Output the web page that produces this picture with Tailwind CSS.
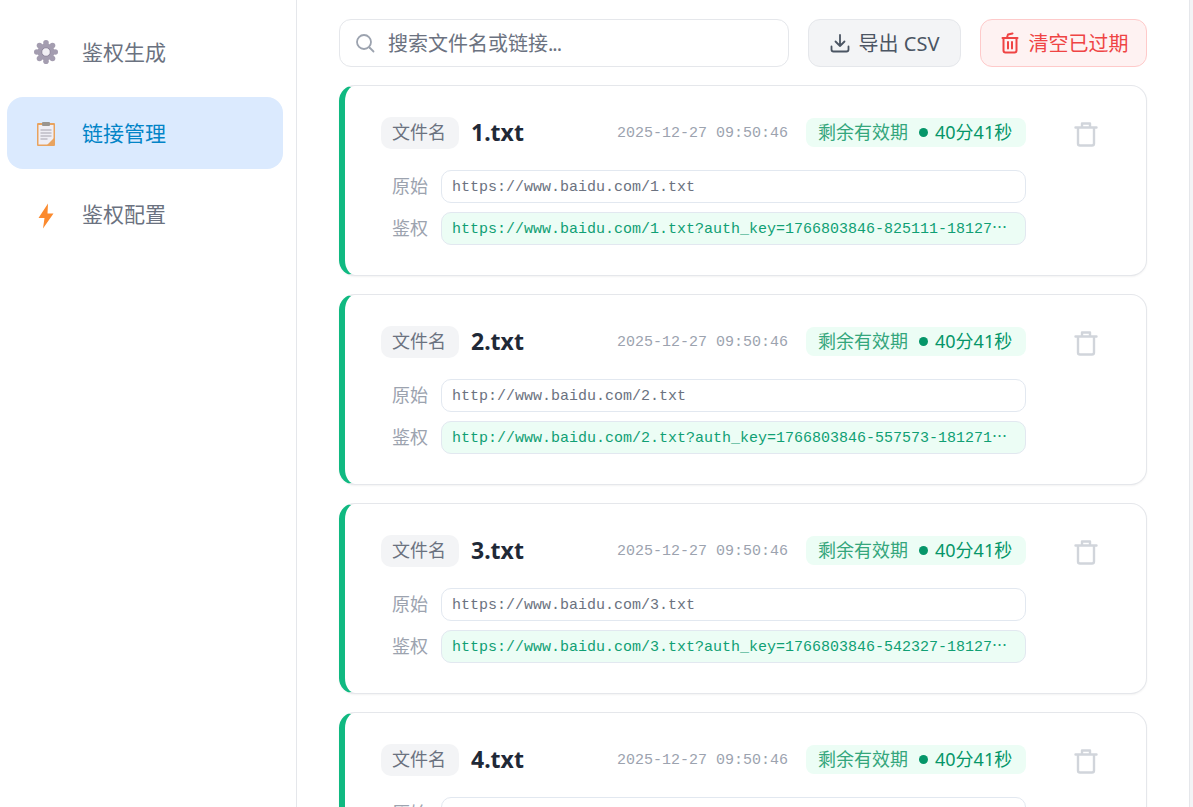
<!DOCTYPE html>
<html lang="zh"><head><meta charset="utf-8">
<script src="https://cdn.jsdelivr.net/npm/@tailwindcss/browser@4"></script>
<title>链接管理</title></head>
<body class="bg-white overflow-hidden">
<div class="flex h-[807px] w-[1193px] overflow-hidden font-['Noto_Sans','Noto_Sans_CJK_SC',sans-serif]">
  <aside class="w-[297px] shrink-0 border-r border-[#e5e7eb] pl-[7px] pr-[13px] pt-[16px] flex flex-col gap-[9px] text-[21px]">
    <a class="h-[72px] rounded-[16px] flex items-center pl-[26px] gap-[23px] text-[#6b7280]">
      <svg class="w-[26px] h-[26px]" viewBox="0 0 26 26"><g fill="#a49db0"><circle cx="13" cy="13" r="8.500"/><circle cx="13" cy="3.800" r="2.800"/><circle cx="13" cy="22.200" r="2.800"/><circle cx="3.800" cy="13" r="2.800"/><circle cx="22.200" cy="13" r="2.800"/><circle cx="6.500" cy="6.500" r="2.800"/><circle cx="19.500" cy="6.500" r="2.800"/><circle cx="6.500" cy="19.500" r="2.800"/><circle cx="19.500" cy="19.500" r="2.800"/></g><circle cx="13" cy="13" r="4.300" fill="#f1eff4"/><circle cx="13" cy="13" r="4.300" fill="none" stroke="#8f879d" stroke-width="1"/></svg>
      <span class="pt-[1px]">鉴权生成</span>
    </a>
    <a class="h-[72px] rounded-[16px] flex items-center pl-[26px] gap-[23px] bg-[#dbeafe] text-[#0284c7]">
      <svg class="w-[26px] h-[26px] mt-[2px]" viewBox="0 0 26 26"><rect x="4" y="2" width="18" height="23" rx="1" fill="#e8a35f"/><rect x="5.500" y="4" width="15" height="19.500" fill="#efeef5"/><path d="M21 17v7h-7z" fill="#e8a35f"/><rect x="9" y="1" width="8" height="4" rx="1" fill="#9a958f"/><path d="M7.500 9h11M7.500 12h11M7.500 15h11M7.500 18h7" stroke="#a5a2ad" stroke-width="1.200"/></svg>
      <span class="pt-[1px]">链接管理</span>
    </a>
    <a class="h-[72px] rounded-[16px] flex items-center pl-[26px] gap-[23px] text-[#6b7280]">
      <svg class="w-[26px] h-[26px] mt-[3px]" viewBox="0 0 26 26"><path d="M15 0.500 5.500 15H11.500L10 25.500 20.500 10.500H14.500z" fill="#fb8a2e"/></svg>
      <span class="pt-[1px]">鉴权配置</span>
    </a>
  </aside>
  <main class="flex-1 min-w-0 pl-[42px] pr-[42px] pt-[19px]">
    <div class="flex gap-[19px] h-[48px]">
      <div class="flex-1 border border-[#e5e7eb] rounded-[12px] flex items-center pl-[15px] gap-[13px] text-[20px] text-[#6b7280]">
        <svg class="w-[20px] h-[20px]" viewBox="0 0 20 20" fill="none" stroke="#9ca3af" stroke-width="1.800" stroke-linecap="round"><circle cx="9" cy="9" r="7"/><path d="m14.500 14.500 4 4"/></svg>
        <span class="pt-[1px]">搜索文件名或链接<span class="tracking-[-1px]">...</span></span>
      </div>
      <button class="w-[153px] rounded-[12px] border border-[#e5e7eb] bg-[#f3f4f6] text-[#4b5563] text-[20px] flex items-center justify-center gap-[9px]">
        <svg class="w-[20px] h-[20px]" viewBox="0 0 20 20" fill="none" stroke="#4b5563" stroke-width="1.800" stroke-linecap="round" stroke-linejoin="round"><path d="M10 2v11M5.500 8.500 10 13l4.500-4.500M1.500 13.500v3a2 2 0 0 0 2 2h13a2 2 0 0 0 2-2v-3"/></svg>
        <span class="pt-[1px]">导出 CSV</span>
      </button>
      <button class="w-[167px] rounded-[12px] border border-[#fecaca] bg-[#fef2f2] text-[#ef4444] text-[20px] flex items-center justify-center gap-[10px] pl-[2px]">
        <svg class="w-[18px] h-[22px]" viewBox="0 0 18 22" fill="none" stroke="#ef4444" stroke-width="2" stroke-linecap="round" stroke-linejoin="round"><path d="M1.500 6h15M6 5.500 7 2.500l4.500-1M2.500 6v12.500a2 2 0 0 0 2 2h9a2 2 0 0 0 2-2V6M7 10v6.500M11 10v6.500"/></svg>
        <span class="pt-[1px]">清空已过期</span>
      </button>
    </div>
    <div class="mt-[18px] flex flex-col gap-[18px]">
      <section class="h-[191px] shrink-0 flex border border-[#e5e7eb] border-l-[6px] border-l-[#10b981] rounded-[16px] bg-white shadow-[0_1px_2px_rgba(0,0,0,0.05)] pl-[36px] pt-[31px]">
        <div class="w-[645px] shrink-0">
          <div class="flex items-center h-[32px]">
            <span class="w-[78px] h-[32px] rounded-[10px] bg-[#f3f4f6] text-[#6b7280] text-[18px] pr-[2px] pb-[2px] flex items-center justify-center shrink-0">文件名</span>
            <span class="ml-[12px] pb-[2px] text-[23px] font-bold text-[#1f2937]">1.txt</span>
            <span class="ml-auto pt-[2px] font-['Liberation_Mono',monospace] text-[15px] text-[#9ca3af]">2025-12-27 09:50:46</span>
            <span class="ml-[18px] mb-[1px] w-[220px] h-[29px] rounded-[8px] bg-[#ecfdf5] text-[18px] flex items-center pl-[12px]"><span class="text-[#34a67c]">剩余有效期</span><span class="ml-[11px] w-[9px] h-[9px] rounded-full bg-[#059669]"></span><span class="ml-[7px] text-[#059669]">40分41秒</span></span>
          </div>
          <div class="mt-[21px] flex items-center h-[33px] text-[18px]"><span class="w-[60px] pl-[11px] text-[#9ca3af] shrink-0">原始</span><span class="flex-1 min-w-0 h-[33px] border border-[#e2e8f0] rounded-[10px] px-[10px] pt-[4px] flex items-center font-['Liberation_Mono',monospace] text-[15px] text-[#6b7280]"><span class="truncate">https://www.baidu.com/1.txt</span></span></div>
          <div class="mt-[9px] flex items-center h-[33px] text-[18px]"><span class="w-[60px] pl-[11px] text-[#9ca3af] shrink-0">鉴权</span><span class="flex-1 min-w-0 h-[33px] border border-[#e2e8f0] rounded-[10px] px-[10px] flex items-center bg-[#ecfdf5] font-['Liberation_Mono',monospace] text-[15px] text-[#10a074]"><span class="truncate">https://www.baidu.com/1.txt?auth_key=1766803846-825111-18127<span class="font-['Noto_Sans_CJK_SC']">…</span></span></span></div>
        </div>
        <svg class="ml-[48px] mt-[4px] w-[24px] h-[26px]" viewBox="0 0 24 26" fill="none" stroke="#d1d5db" stroke-width="2.400" stroke-linecap="round" stroke-linejoin="round"><path d="M1.500 6.500h21M8 6V2.500h8V6M4 7v15.500a2 2 0 0 0 2 2h12a2 2 0 0 0 2-2V7"/></svg>
      </section>
      <section class="h-[191px] shrink-0 flex border border-[#e5e7eb] border-l-[6px] border-l-[#10b981] rounded-[16px] bg-white shadow-[0_1px_2px_rgba(0,0,0,0.05)] pl-[36px] pt-[31px]">
        <div class="w-[645px] shrink-0">
          <div class="flex items-center h-[32px]">
            <span class="w-[78px] h-[32px] rounded-[10px] bg-[#f3f4f6] text-[#6b7280] text-[18px] pr-[2px] pb-[2px] flex items-center justify-center shrink-0">文件名</span>
            <span class="ml-[12px] pb-[2px] text-[23px] font-bold text-[#1f2937]">2.txt</span>
            <span class="ml-auto pt-[2px] font-['Liberation_Mono',monospace] text-[15px] text-[#9ca3af]">2025-12-27 09:50:46</span>
            <span class="ml-[18px] mb-[1px] w-[220px] h-[29px] rounded-[8px] bg-[#ecfdf5] text-[18px] flex items-center pl-[12px]"><span class="text-[#34a67c]">剩余有效期</span><span class="ml-[11px] w-[9px] h-[9px] rounded-full bg-[#059669]"></span><span class="ml-[7px] text-[#059669]">40分41秒</span></span>
          </div>
          <div class="mt-[21px] flex items-center h-[33px] text-[18px]"><span class="w-[60px] pl-[11px] text-[#9ca3af] shrink-0">原始</span><span class="flex-1 min-w-0 h-[33px] border border-[#e2e8f0] rounded-[10px] px-[10px] pt-[4px] flex items-center font-['Liberation_Mono',monospace] text-[15px] text-[#6b7280]"><span class="truncate">http://www.baidu.com/2.txt</span></span></div>
          <div class="mt-[9px] flex items-center h-[33px] text-[18px]"><span class="w-[60px] pl-[11px] text-[#9ca3af] shrink-0">鉴权</span><span class="flex-1 min-w-0 h-[33px] border border-[#e2e8f0] rounded-[10px] px-[10px] flex items-center bg-[#ecfdf5] font-['Liberation_Mono',monospace] text-[15px] text-[#10a074]"><span class="truncate">http://www.baidu.com/2.txt?auth_key=1766803846-557573-181271<span class="font-['Noto_Sans_CJK_SC']">…</span></span></span></div>
        </div>
        <svg class="ml-[48px] mt-[4px] w-[24px] h-[26px]" viewBox="0 0 24 26" fill="none" stroke="#d1d5db" stroke-width="2.400" stroke-linecap="round" stroke-linejoin="round"><path d="M1.500 6.500h21M8 6V2.500h8V6M4 7v15.500a2 2 0 0 0 2 2h12a2 2 0 0 0 2-2V7"/></svg>
      </section>
      <section class="h-[191px] shrink-0 flex border border-[#e5e7eb] border-l-[6px] border-l-[#10b981] rounded-[16px] bg-white shadow-[0_1px_2px_rgba(0,0,0,0.05)] pl-[36px] pt-[31px]">
        <div class="w-[645px] shrink-0">
          <div class="flex items-center h-[32px]">
            <span class="w-[78px] h-[32px] rounded-[10px] bg-[#f3f4f6] text-[#6b7280] text-[18px] pr-[2px] pb-[2px] flex items-center justify-center shrink-0">文件名</span>
            <span class="ml-[12px] pb-[2px] text-[23px] font-bold text-[#1f2937]">3.txt</span>
            <span class="ml-auto pt-[2px] font-['Liberation_Mono',monospace] text-[15px] text-[#9ca3af]">2025-12-27 09:50:46</span>
            <span class="ml-[18px] mb-[1px] w-[220px] h-[29px] rounded-[8px] bg-[#ecfdf5] text-[18px] flex items-center pl-[12px]"><span class="text-[#34a67c]">剩余有效期</span><span class="ml-[11px] w-[9px] h-[9px] rounded-full bg-[#059669]"></span><span class="ml-[7px] text-[#059669]">40分41秒</span></span>
          </div>
          <div class="mt-[21px] flex items-center h-[33px] text-[18px]"><span class="w-[60px] pl-[11px] text-[#9ca3af] shrink-0">原始</span><span class="flex-1 min-w-0 h-[33px] border border-[#e2e8f0] rounded-[10px] px-[10px] pt-[4px] flex items-center font-['Liberation_Mono',monospace] text-[15px] text-[#6b7280]"><span class="truncate">https://www.baidu.com/3.txt</span></span></div>
          <div class="mt-[9px] flex items-center h-[33px] text-[18px]"><span class="w-[60px] pl-[11px] text-[#9ca3af] shrink-0">鉴权</span><span class="flex-1 min-w-0 h-[33px] border border-[#e2e8f0] rounded-[10px] px-[10px] flex items-center bg-[#ecfdf5] font-['Liberation_Mono',monospace] text-[15px] text-[#10a074]"><span class="truncate">https://www.baidu.com/3.txt?auth_key=1766803846-542327-18127<span class="font-['Noto_Sans_CJK_SC']">…</span></span></span></div>
        </div>
        <svg class="ml-[48px] mt-[4px] w-[24px] h-[26px]" viewBox="0 0 24 26" fill="none" stroke="#d1d5db" stroke-width="2.400" stroke-linecap="round" stroke-linejoin="round"><path d="M1.500 6.500h21M8 6V2.500h8V6M4 7v15.500a2 2 0 0 0 2 2h12a2 2 0 0 0 2-2V7"/></svg>
      </section>
      <section class="h-[191px] shrink-0 flex border border-[#e5e7eb] border-l-[6px] border-l-[#10b981] rounded-[16px] bg-white shadow-[0_1px_2px_rgba(0,0,0,0.05)] pl-[36px] pt-[31px]">
        <div class="w-[645px] shrink-0">
          <div class="flex items-center h-[32px]">
            <span class="w-[78px] h-[32px] rounded-[10px] bg-[#f3f4f6] text-[#6b7280] text-[18px] pr-[2px] pb-[2px] flex items-center justify-center shrink-0">文件名</span>
            <span class="ml-[12px] pb-[2px] text-[23px] font-bold text-[#1f2937]">4.txt</span>
            <span class="ml-auto pt-[2px] font-['Liberation_Mono',monospace] text-[15px] text-[#9ca3af]">2025-12-27 09:50:46</span>
            <span class="ml-[18px] mb-[1px] w-[220px] h-[29px] rounded-[8px] bg-[#ecfdf5] text-[18px] flex items-center pl-[12px]"><span class="text-[#34a67c]">剩余有效期</span><span class="ml-[11px] w-[9px] h-[9px] rounded-full bg-[#059669]"></span><span class="ml-[7px] text-[#059669]">40分41秒</span></span>
          </div>
          <div class="mt-[21px] flex items-center h-[33px] text-[18px]"><span class="w-[60px] pl-[11px] text-[#9ca3af] shrink-0">原始</span><span class="flex-1 min-w-0 h-[33px] border border-[#e2e8f0] rounded-[10px] px-[10px] pt-[4px] flex items-center font-['Liberation_Mono',monospace] text-[15px] text-[#6b7280]"><span class="truncate">https://www.baidu.com/4.txt</span></span></div>
        </div>
        <svg class="ml-[48px] mt-[4px] w-[24px] h-[26px]" viewBox="0 0 24 26" fill="none" stroke="#d1d5db" stroke-width="2.400" stroke-linecap="round" stroke-linejoin="round"><path d="M1.500 6.500h21M8 6V2.500h8V6M4 7v15.500a2 2 0 0 0 2 2h12a2 2 0 0 0 2-2V7"/></svg>
      </section>
    </div>
  </main>
  <div class="w-[4px] shrink-0 bg-[#f3f4f6] border-l border-[#e5e7eb]"></div>
</div>
</body></html>
